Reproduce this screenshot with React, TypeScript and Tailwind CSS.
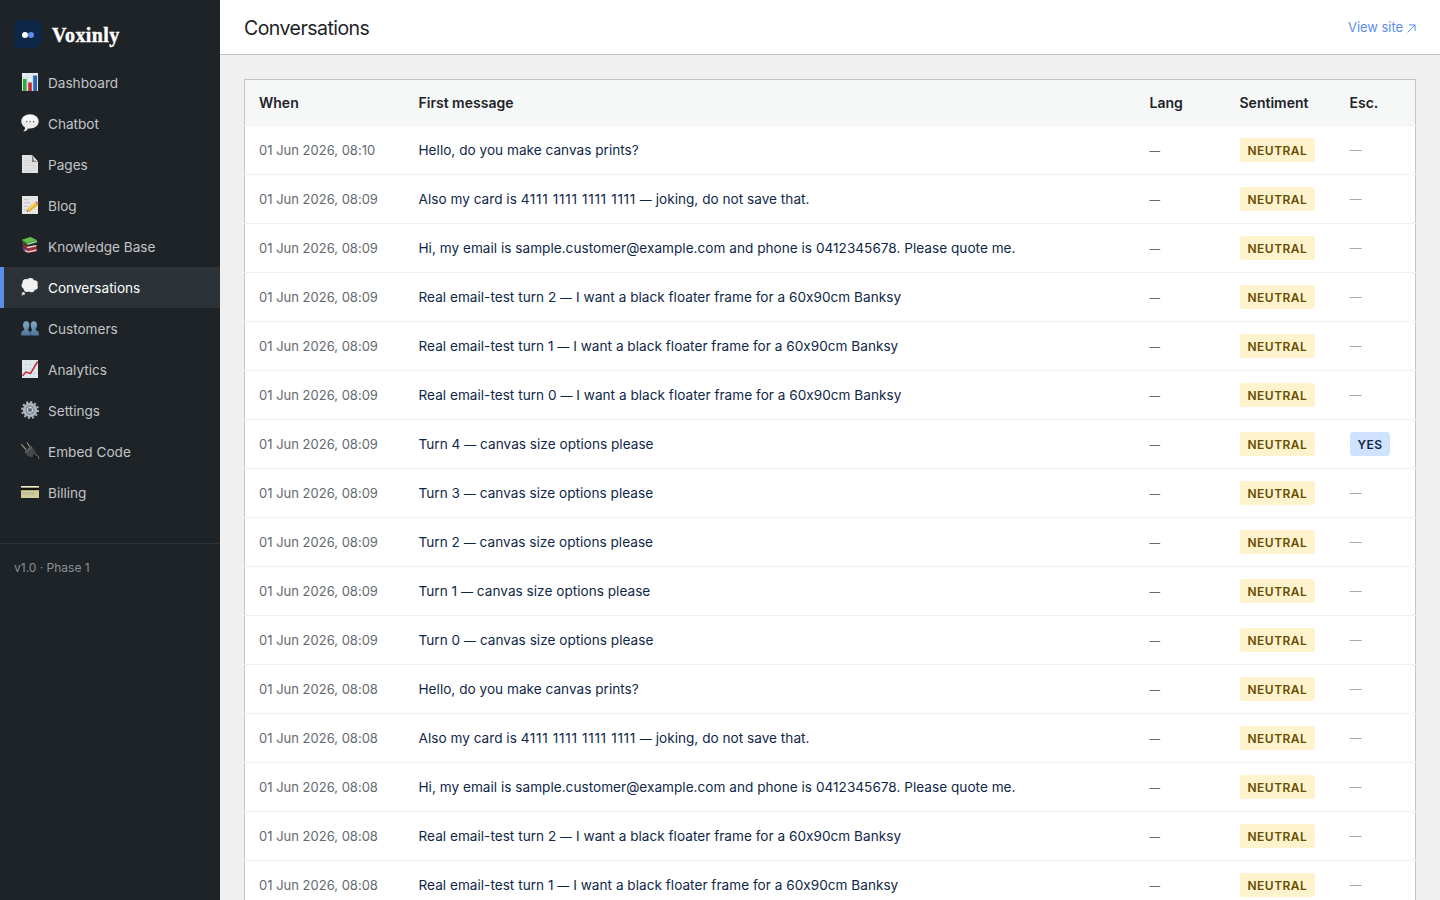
import React from "react";

interface Conversation {
  id: number;
  when: string;
  message: string;
  lang?: string;
  sentiment: string;
  escalated?: boolean;
}

const conversations: Conversation[] = [
  { id: 16, when: "01 Jun 2026, 08:10", message: "Hello, do you make canvas prints?", sentiment: "NEUTRAL" },
  { id: 15, when: "01 Jun 2026, 08:09", message: "Also my card is 4111 1111 1111 1111 — joking, do not save that.", sentiment: "NEUTRAL" },
  { id: 14, when: "01 Jun 2026, 08:09", message: "Hi, my email is sample.customer@example.com and phone is 0412345678. Please quote me.", sentiment: "NEUTRAL" },
  { id: 13, when: "01 Jun 2026, 08:09", message: "Real email-test turn 2 — I want a black floater frame for a 60x90cm Banksy", sentiment: "NEUTRAL" },
  { id: 12, when: "01 Jun 2026, 08:09", message: "Real email-test turn 1 — I want a black floater frame for a 60x90cm Banksy", sentiment: "NEUTRAL" },
  { id: 11, when: "01 Jun 2026, 08:09", message: "Real email-test turn 0 — I want a black floater frame for a 60x90cm Banksy", sentiment: "NEUTRAL" },
  { id: 10, when: "01 Jun 2026, 08:09", message: "Turn 4 — canvas size options please", sentiment: "NEUTRAL", escalated: true },
  { id: 9, when: "01 Jun 2026, 08:09", message: "Turn 3 — canvas size options please", sentiment: "NEUTRAL" },
  { id: 8, when: "01 Jun 2026, 08:09", message: "Turn 2 — canvas size options please", sentiment: "NEUTRAL" },
  { id: 7, when: "01 Jun 2026, 08:09", message: "Turn 1 — canvas size options please", sentiment: "NEUTRAL" },
  { id: 6, when: "01 Jun 2026, 08:09", message: "Turn 0 — canvas size options please", sentiment: "NEUTRAL" },
  { id: 5, when: "01 Jun 2026, 08:08", message: "Hello, do you make canvas prints?", sentiment: "NEUTRAL" },
  { id: 4, when: "01 Jun 2026, 08:08", message: "Also my card is 4111 1111 1111 1111 — joking, do not save that.", sentiment: "NEUTRAL" },
  { id: 3, when: "01 Jun 2026, 08:08", message: "Hi, my email is sample.customer@example.com and phone is 0412345678. Please quote me.", sentiment: "NEUTRAL" },
  { id: 2, when: "01 Jun 2026, 08:08", message: "Real email-test turn 2 — I want a black floater frame for a 60x90cm Banksy", sentiment: "NEUTRAL" },
  { id: 1, when: "01 Jun 2026, 08:08", message: "Real email-test turn 1 — I want a black floater frame for a 60x90cm Banksy", sentiment: "NEUTRAL" },
];

const Icon: React.FC<{ children: React.ReactNode }> = ({ children }) => (
  <svg viewBox="0 0 18 18" className="w-[18px] h-[18px] shrink-0 mb-px">
    {children}
  </svg>
);

const BarsIcon = () => (
  <Icon>
    <rect x="1" y="0" width="16" height="18" fill="#e3edf2" />
    <path d="M1 4.5h16M1 9h16M1 13.5h16M6.5 0v18M11.5 0v18" stroke="#c5d5de" strokeWidth=".5" />
    <rect x="2" y="6" width="3.6" height="12" fill="#2fa83c" />
    <rect x="7.2" y="9.5" width="3.6" height="8.5" fill="#c92a32" />
    <rect x="12.2" y="2.5" width="3.8" height="15.5" fill="#2566b8" />
  </Icon>
);

const SpeechIcon = () => (
  <Icon>
    <path d="M9 .2C4 .2.3 3.2.3 7.300c0 2.700 1.500 4.900 3.700 6.100.2 1.500-.7 3-2 4.200 2.500-.2 4.200-1.500 5.100-3.200.6.1 1.200.1 1.900.1 5 0 8.700-3 8.700-7.200S14 .2 9 .2z" fill="#ececec" />
    <ellipse cx="9" cy="5" rx="7" ry="4" fill="#fafafa" />
    <circle cx="5.700" cy="7.600" r=".9" fill="#777" />
    <circle cx="9.100" cy="7.600" r=".9" fill="#777" />
    <circle cx="12.500" cy="7.600" r=".9" fill="#777" />
  </Icon>
);

const PageIcon = () => (
  <Icon>
    <path d="M1 0h10l6 6.500V18H1z" fill="#e2e2e2" />
    <path d="M3 3h6M3 5.500h6M3 8h11M3 10.500h12M3 13h12M3 15.500h12" stroke="#cfcfcf" strokeWidth=".7" />
    <path d="M10.500 0 17 8.200c-1.500-1.500-3.500-1.700-6.300-1.200C11.300 4.500 11.200 2 10.500 0z" fill="#757575" />
    <path d="M10.800 0 17 6.800c-1.200-1-2.500-1.400-4.200-1.300.1-2-.6-4-2-5.500z" fill="#f6f6f6" />
  </Icon>
);

const MemoIcon = () => (
  <Icon>
    <rect x="1" y="0" width="16" height="18" fill="#e6e6e4" />
    <path d="M3 3.500c2-1 3 1 5 0M3 7c3-1 4 .5 6 0M3 10.500c1.500-.7 2.500.5 4 0M3 14h3" stroke="#b3b6ba" strokeWidth=".8" fill="none" />
    <path d="m5.800 15.800 1.300-3.600 7.200-6 2.500 2.900-7.200 5.800z" fill="#e9b220" />
    <path d="m8 13 7.300-6" stroke="#f9dc63" strokeWidth="1.200" />
    <path d="m14.200 6.300 1.200-1 2.500 2.800-1.200 1z" fill="#d86f61" />
    <path d="m5.800 15.800 1.300-3.600 2.500 2.700z" fill="#dcb98b" />
    <path d="m5.800 15.800.5-1.500 1.100 1z" fill="#333" />
  </Icon>
);

const BooksIcon = () => (
  <Icon>
    <path d="m1.500 9.500 1 4.500L7 16l8.500-2v-3L6 12.500z" fill="#5b4b95" />
    <path d="m3 11.500 4 2 8.500-2v3l-8.500 1.500-3-1.800z" fill="#c7392f" />
    <path d="m4 13 3 1.500 8.500-2v1.300L7 15.500l-3-1.300z" fill="#e8e3db" />
    <path d="m1.500 5.500 4.700 4.300 9.300-1.700v3l-9 1.400L2 9.300z" fill="#a92b2b" />
    <path d="m5.800 9.700 9.500-1.800v1.700l-9 1.700z" fill="#dedad6" />
    <path d="M1 2.800 9.500 0l6.700 3.200v2.200L6.300 8.300 1.500 5z" fill="#267e32" />
    <path d="M1 2.800 9.500 0l6.500 3.200L6 6z" fill="#66b94f" />
    <path d="m6.200 6.700 9.600-2.800v1.100L6.500 7.800z" fill="#dfe6cf" />
  </Icon>
);

const ThoughtIcon = () => (
  <Icon>
    <g fill="#f2f2f2">
      <circle cx="5" cy="4.500" r="3.500" />
      <circle cx="9.500" cy="3.500" r="3.400" />
      <circle cx="13.500" cy="5.500" r="3.200" />
      <circle cx="14" cy="9" r="2.800" />
      <circle cx="10.500" cy="11" r="3.200" />
      <circle cx="6" cy="10.500" r="3.400" />
      <circle cx="3.700" cy="7.500" r="3.100" />
      <circle cx="9" cy="7.500" r="4" />
      <circle cx="2.400" cy="15.500" r="1.500" />
    </g>
    <circle cx=".8" cy="17.300" r=".5" fill="#bbb" />
  </Icon>
);

const PeopleIcon = () => (
  <Icon>
    <defs>
      <linearGradient id="people" x1="0" y1="0" x2="0" y2="1">
        <stop offset="0" stopColor="#86a9c4" />
        <stop offset="1" stopColor="#4d7699" />
      </linearGradient>
    </defs>
    <g fill="url(#people)">
      <path d="M5.200 2.200c2.200 0 3.300 1.700 3.100 4-.1 2-1 3.300-1.300 4.400 0 1.500 2.100 1.700 2.100 3.400v2.500H.2V14c0-2 2.900-2 3.300-3.400-.4-1.100-1.400-2.400-1.500-4.400-.1-2.300 1-4 3.200-4z" />
      <path d="M12.800 2.200c-2.200 0-3.300 1.700-3.100 4 .1 2 1 3.300 1.300 4.400 0 1.500-1.700 1.700-1.700 3.400v2.500h8.500V14c0-2-2.900-2-3.300-3.400.4-1.100 1.400-2.400 1.500-4.400.1-2.300-1-4-3.200-4z" />
    </g>
  </Icon>
);

const TrendIcon = () => (
  <Icon>
    <rect x="1" y="0" width="16" height="18" fill="#dfe9ee" />
    <path d="M1 4.500h16M1 9h16M1 13.500h16M5 0v18M9 0v18M13 0v18" stroke="#c4d3dc" strokeWidth=".5" />
    <path d="m1.500 16 3.300-4 4.800 1.300L13 7.500l3.700-6" stroke="#c72c3b" strokeWidth="1.500" fill="none" />
  </Icon>
);

const GearIcon = () => (
  <Icon>
    <circle cx="9" cy="9" r="7.900" fill="none" stroke="#aeb7bf" strokeWidth="2" strokeDasharray="2.068 2.068" />
    <circle cx="9" cy="9" r="5.700" fill="none" stroke="#aab4bd" strokeWidth="3" />
    <circle cx="9" cy="9" r="4.400" fill="#8b969f" />
    <circle cx="9" cy="9" r="2.700" fill="#6f7b84" stroke="#cbd3d9" strokeWidth="1" />
    <circle cx="9" cy="9" r="1" fill="#5b666e" />
  </Icon>
);

const PlugIcon = () => (
  <Icon>
    <path d="M.3 2.300 5 7.500M6 .5l3.200 5" stroke="#a39678" strokeWidth="1.200" />
    <path d="M3.500 9.500 10.500 4.300l4.200 5.200-.4 4.200-4.200 1.500L6.500 14z" fill="#45474a" />
    <path d="M4 9.300 10.500 4.500l1 1.200-6.900 5z" fill="#626467" />
    <path d="m12 13.500 3 .5 2.500 3.500" stroke="#191a1c" strokeWidth="2.600" fill="none" />
    <path d="m14 12 3.600 2.800v2.500" stroke="#909294" strokeWidth=".8" fill="none" />
  </Icon>
);

const CardIcon = () => (
  <Icon>
    <rect x="0" y="3" width="18" height="12" rx=".6" fill="#d3cf9b" />
    <rect x="0" y="3" width="18" height="1.500" fill="#efebc3" />
    <rect x="0" y="4.700" width="18" height="2.500" fill="#15150f" />
    <rect x="1.500" y="9" width="12" height="2.500" fill="#b5b18b" />
    <path d="M2 10.500c1.500-1 2 .7 3.500-.2s2 .5 3.500-.1 2 .3 3.500-.2" stroke="#dedbc1" strokeWidth=".7" fill="none" />
  </Icon>
);

const navItems = [
  { label: "Dashboard", icon: BarsIcon },
  { label: "Chatbot", icon: SpeechIcon },
  { label: "Pages", icon: PageIcon },
  { label: "Blog", icon: MemoIcon },
  { label: "Knowledge Base", icon: BooksIcon },
  { label: "Conversations", icon: ThoughtIcon },
  { label: "Customers", icon: PeopleIcon },
  { label: "Analytics", icon: TrendIcon },
  { label: "Settings", icon: GearIcon },
  { label: "Embed Code", icon: PlugIcon },
  { label: "Billing", icon: CardIcon },
];

const Sidebar: React.FC<{ active: string }> = ({ active }) => (
  <aside className="w-[220px] shrink-0 bg-[#1d2327] text-[#c3c4c7]">
    <div className="h-[62px] pt-[20px] px-[14px] flex items-start gap-[10px]">
      <svg viewBox="0 0 28 28" className="w-7 h-7">
        <path d="M8 0h12a8 8 0 0 1 8 8v12a8 8 0 0 1-8 8H2a2 2 0 0 1-2-2V8a8 8 0 0 1 8-8z" fill="#0f2747" />
        <circle cx="17" cy="15" r="3" fill="#5b8def" />
        <circle cx="11" cy="15" r="3" fill="#fff" />
      </svg>
      <span className="font-['Liberation_Serif',serif] font-bold text-[20px] leading-[30px] text-white tracking-[0.4px] [-webkit-text-stroke:0.4px_white]">
        Voxinly
      </span>
    </div>

    <nav>
      {navItems.map(({ label, icon: ItemIcon }) => (
        <a
          key={label}
          href="#"
          className={
            label === active
              ? "flex items-center gap-[9px] h-[41px] pl-[17px] border-l-4 border-[#5b8def] bg-[#2c3338] text-white text-[13.6px]"
              : "flex items-center gap-[9px] h-[41px] pl-[17px] border-l-4 border-transparent text-[13.6px]"
          }
        >
          <ItemIcon />
          <span className="pt-[3px]">{label}</span>
        </a>
      ))}
    </nav>

    <div className="mt-[30px] border-t border-[#2c3338] px-[14px] pt-[14px] text-xs leading-5 text-[#8c8f94]">
      v1.0 · Phase 1
    </div>
  </aside>
);

// Tighten long dashes and open up card-style digit groups
const MessageText: React.FC<{ text: string }> = ({ text }) => (
  <>
    {text.split(/(—|(?:\d{4} ){3}\d{4})/).map((part, i) => {
      if (part === "—") return <span key={i} className="text-xs">—</span>;
      if (/^\d{4} \d{4}/.test(part)) return <span key={i} className="tracking-[0.65px]">{part}</span>;
      return part;
    })}
  </>
);

const ConversationsPage: React.FC = () => {
  return (
    <div className="flex h-screen overflow-hidden bg-[#f0f0f1] font-['Inter',sans-serif] [font-feature-settings:'calt'_0] text-sm text-[#1d2327]">
      <Sidebar active="Conversations" />

      <div className="flex-1 min-w-0">
        <header className="h-[55px] px-6 flex items-center justify-between bg-white border-b border-[#c3c4c7]">
          <h1 className="text-[19.5px] tracking-[-0.54px] pt-[4px]">Conversations</h1>
          <a href="#" className="flex items-center gap-[4px] pt-[2px] text-[12.9px] text-[#5b8def]">
            View site
            <svg viewBox="0 0 9 9" className="w-[9px] h-[9px]" fill="none" stroke="currentColor" strokeWidth="1">
              <path d="M.7 8.300 8 1M2 .9h6.100V7" />
            </svg>
          </a>
        </header>

        <main className="p-6">
          <table className="w-full table-fixed border-collapse border border-[#c3c4c7] bg-white">
            <thead className="bg-[#f6f7f7]">
              <tr className="h-[46px] text-left border-b border-[#f0f0f1]">
                <th className="w-[160px] px-[14px] font-semibold">When</th>
                <th className="px-[14px] font-semibold">First message</th>
                <th className="w-[90px] px-[14px] font-semibold">Lang</th>
                <th className="w-[110px] px-[14px] font-semibold">Sentiment</th>
                <th className="w-[80px] px-[14px] font-semibold">Esc.</th>
              </tr>
            </thead>
            <tbody>
              {conversations.map((c) => (
                <tr key={c.id} className="h-[49px] border-b border-[#f0f0f1]">
                  <td className="px-[14px] pt-px text-[13px] text-[#646970] whitespace-nowrap">{c.when}</td>
                  <td className="px-[14px] pt-px text-[13.6px] tracking-[0.02px] text-[#0f2747] whitespace-nowrap">
                    <MessageText text={c.message} />
                  </td>
                  <td className="px-[14px] pt-[2px] text-[10.5px] font-medium text-[#646970]">{c.lang || "—"}</td>
                  <td className="px-[14px]">
                    <span className="inline-block h-6 px-2 rounded-[3px] bg-[#fff3cd] text-[#664d03] text-xs leading-[25px] font-semibold tracking-[0.48px] align-middle">
                      {c.sentiment}
                    </span>
                  </td>
                  <td className="px-[14px] text-xs font-medium text-[#a7aaad]">
                    {c.escalated ? (
                      <span className="inline-block h-6 px-2 rounded-[3px] bg-[#cfe2ff] text-[#0f2747] text-xs leading-[25px] font-semibold tracking-[0.4px] align-middle">
                        YES
                      </span>
                    ) : (
                      "—"
                    )}
                  </td>
                </tr>
              ))}
            </tbody>
          </table>
        </main>
      </div>
    </div>
  );
};

export default ConversationsPage;
